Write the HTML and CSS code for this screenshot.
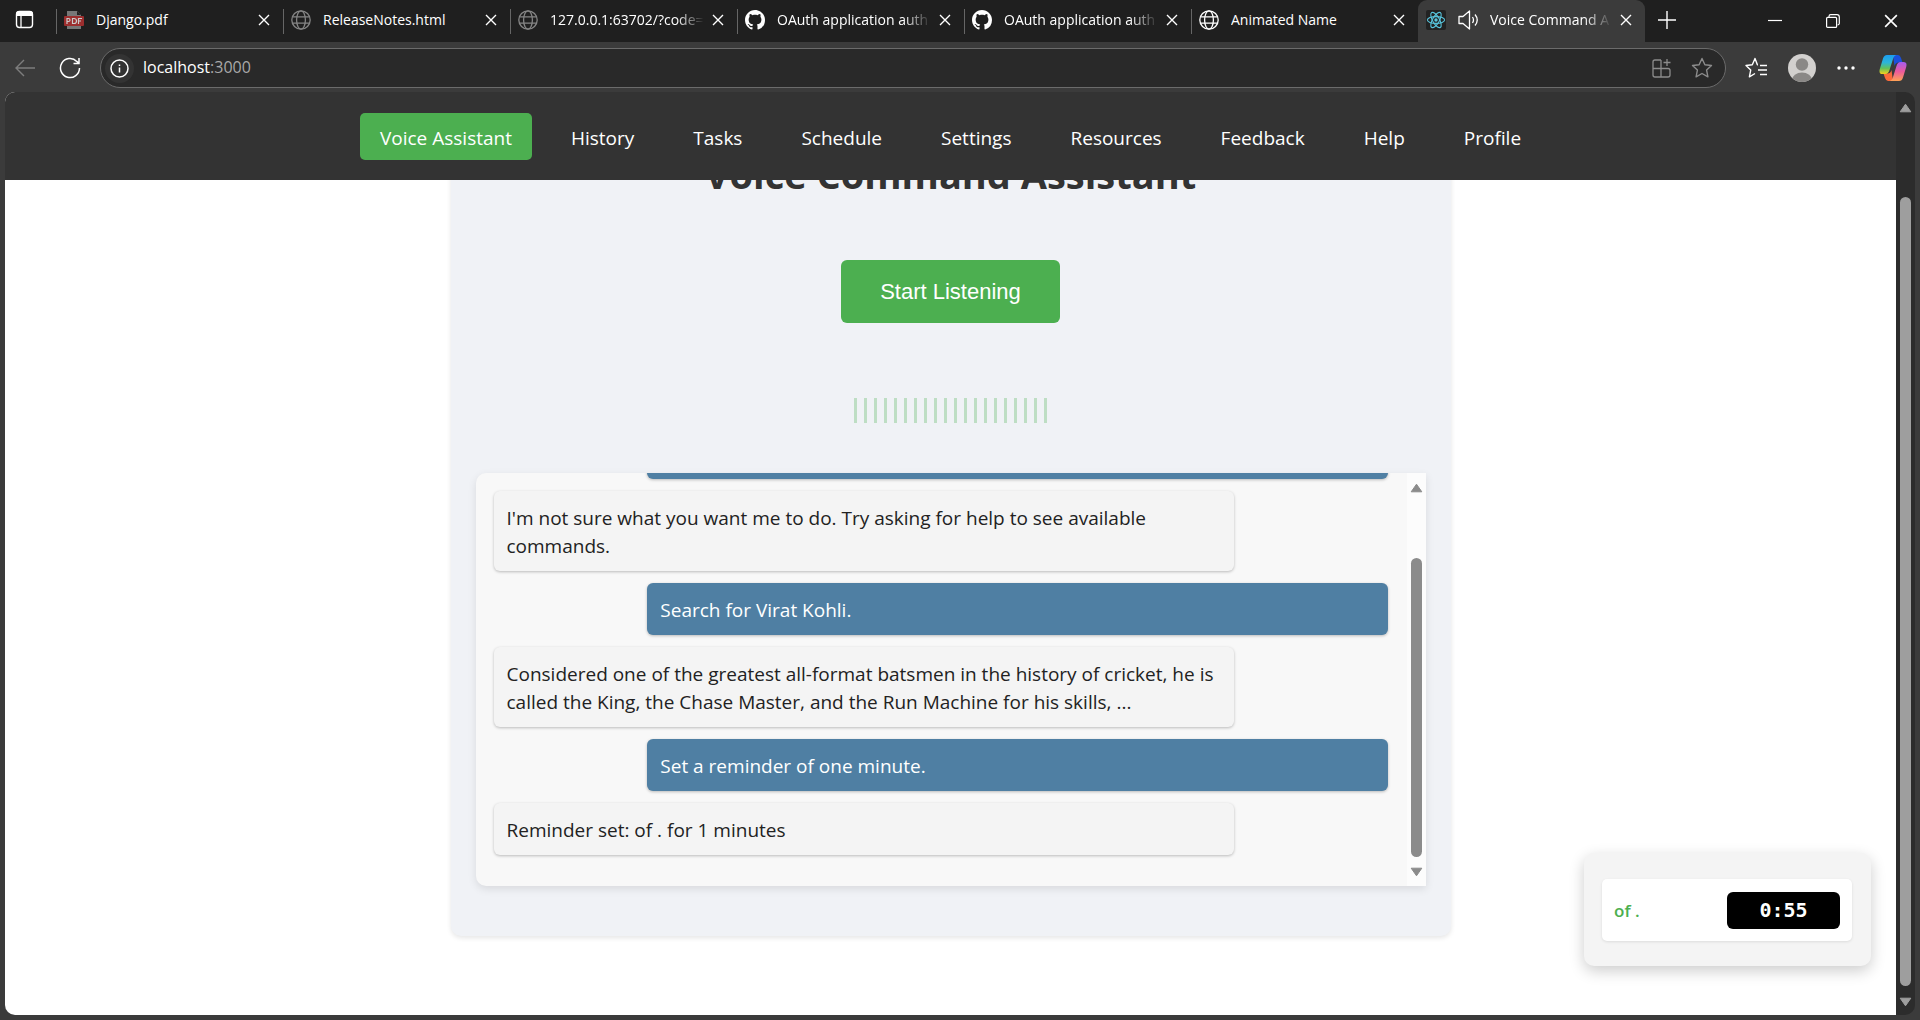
FILE: index.html
```html
<!DOCTYPE html>
<html lang="en">
<head>
<meta charset="utf-8">
<title>Voice Command Assistant</title>
<link rel="stylesheet" href="styles.css">
</head>
<body>
<svg class="defs" aria-hidden="true">
  <symbol id="globe" viewBox="0 0 20 20"><g fill="none" stroke="currentColor" stroke-width="1.3"><circle cx="10" cy="10" r="9.2"/><ellipse cx="10" cy="10" rx="4.4" ry="9.2"/><path d="M1.6 6.8h16.8M1.6 13.2h16.8"/></g></symbol>
  <symbol id="github" viewBox="0 0 16 16"><path fill="currentColor" d="M8 0C3.58 0 0 3.58 0 8c0 3.54 2.29 6.53 5.47 7.59.4.07.55-.17.55-.38 0-.19-.01-.82-.01-1.49-2.01.37-2.53-.49-2.69-.94-.09-.23-.48-.94-.82-1.13-.28-.15-.68-.52-.01-.53.63-.01 1.08.58 1.23.82.72 1.21 1.87.87 2.33.66.07-.52.28-.87.51-1.07-1.78-.2-3.64-.89-3.64-3.95 0-.87.31-1.59.82-2.15-.08-.2-.36-1.02.08-2.12 0 0 .67-.21 2.2.82.64-.18 1.32-.27 2-.27s1.36.09 2 .27c1.53-1.04 2.2-.82 2.2-.82.44 1.1.16 1.92.08 2.12.51.56.82 1.27.82 2.15 0 3.07-1.87 3.75-3.65 3.95.29.25.54.73.54 1.48 0 1.07-.01 1.93-.01 2.2 0 .21.15.46.55.38A8.01 8.01 0 0 0 16 8c0-4.42-3.58-8-8-8z"/></symbol>
  <symbol id="cross" viewBox="0 0 12 12"><path d="M1 1l10 10M11 1L1 11" stroke="currentColor" stroke-width="1.4" fill="none"/></symbol>
  <symbol id="arrow-up" viewBox="0 0 13 10"><path d="M6.5 1.2L11.8 8.8H1.2z" fill="currentColor" stroke="currentColor" stroke-linejoin="round"/></symbol>
  <symbol id="arrow-down" viewBox="0 0 13 10"><path d="M6.5 8.8L11.8 1.2H1.2z" fill="currentColor" stroke="currentColor" stroke-linejoin="round"/></symbol>
</svg>

<div class="browser">
  <div class="tab-strip">
    <button class="tab-actions" aria-label="Tab actions"><svg width="20" height="20" viewBox="0 0 20 20"><rect x="1.5" y="1.5" width="16" height="16" rx="3" fill="none" stroke="#fff" stroke-width="1.4"/><path d="M1 6V4a3 3 0 0 1 3-3h11a3 3 0 0 1 3 3v2z" fill="#fff"/><path d="M6 6v11" stroke="#fff" stroke-width="1.3"/></svg></button>
    <div class="tabs">
      <div class="tab"><svg class="favicon" viewBox="0 0 20 20"><path d="M3 1h10l4 4v14H3z" fill="#777"/><path d="M13 1l4 4h-4z" fill="#222"/><rect x="0" y="6" width="20" height="10" rx="1" fill="#9c2e2e"/><path d="M3 14V8.500h1.500a1.500 1.500 0 0 1 0 3H3M8.500 8.500v5H10a2.500 2.500 0 0 0 0-5zM14.500 14V8.500H18M14.500 11H17" stroke="#ccc" stroke-width="1.200" fill="none"/></svg><span class="tab-title">Django.pdf</span><button class="close" aria-label="Close tab"><svg><use href="#cross"/></svg></button></div>
      <div class="tab"><svg class="favicon dim"><use href="#globe"/></svg><span class="tab-title">ReleaseNotes.html</span><button class="close" aria-label="Close tab"><svg><use href="#cross"/></svg></button></div>
      <div class="tab"><svg class="favicon dim"><use href="#globe"/></svg><span class="tab-title fade">127.0.0.1:63702/?code=</span><button class="close" aria-label="Close tab"><svg><use href="#cross"/></svg></button></div>
      <div class="tab"><svg class="favicon"><use href="#github"/></svg><span class="tab-title fade">OAuth application auth</span><button class="close" aria-label="Close tab"><svg><use href="#cross"/></svg></button></div>
      <div class="tab"><svg class="favicon"><use href="#github"/></svg><span class="tab-title fade">OAuth application auth</span><button class="close" aria-label="Close tab"><svg><use href="#cross"/></svg></button></div>
      <div class="tab"><svg class="favicon"><use href="#globe"/></svg><span class="tab-title">Animated Name</span><button class="close" aria-label="Close tab"><svg><use href="#cross"/></svg></button></div>
      <div class="tab active"><svg class="favicon" viewBox="0 0 20 20"><rect width="20" height="20" rx="2" fill="#222"/><g fill="none" stroke="#58c4dc" stroke-width="1.100"><ellipse cx="10" cy="10" rx="8.600" ry="3.400"/><ellipse cx="10" cy="10" rx="8.600" ry="3.400" transform="rotate(60 10 10)"/><ellipse cx="10" cy="10" rx="8.600" ry="3.400" transform="rotate(120 10 10)"/></g><circle cx="10" cy="10" r="1.700" fill="#58c4dc"/></svg><svg class="speaker" viewBox="0 0 22 20" fill="none" stroke="#fff" stroke-width="1.300"><path d="M1 6.500h4L11.500 1v18L5 13.500H1z" stroke-linejoin="round"/><path d="M14.500 7q2 3 0 6M17 4.500q4.500 5.500 0 11"/></svg><span class="tab-title fade">Voice Command A</span><button class="close" aria-label="Close tab"><svg><use href="#cross"/></svg></button></div>
    </div>
    <button class="new-tab" aria-label="New tab"><svg width="18" height="18" viewBox="0 0 18 18"><path d="M9 0v18M0 9h18" stroke="#fff" stroke-width="1.400"/></svg></button>
    <div class="window-controls">
      <button aria-label="Minimize"><svg width="14" height="14" viewBox="0 0 14 14"><path d="M0 6.500h14" stroke="#fff" stroke-width="1.200"/></svg></button>
      <button aria-label="Restore"><svg width="14" height="14" viewBox="0 0 14 14" fill="none" stroke="#fff" stroke-width="1.200"><rect x=".6" y="3.400" width="10" height="10" rx="1"/><path d="M3 3V2.500A1.800 1.800 0 0 1 4.800.7H11A2.300 2.300 0 0 1 13.300 3v6A1.800 1.800 0 0 1 11.500 11"/></svg></button>
      <button aria-label="Close window"><svg width="14" height="14"><use href="#cross"/></svg></button>
    </div>
  </div>

  <div class="toolbar">
    <button class="tool back" aria-label="Back"><svg width="20" height="18" viewBox="0 0 20 18" fill="none" stroke="#7d7d7d" stroke-width="1.400"><path d="M20 9H1M9 1L1 9l8 8"/></svg></button>
    <button class="tool reload" aria-label="Reload"><svg width="22" height="22" viewBox="0 0 22 22" fill="none" stroke="#fff" stroke-width="1.500"><path d="M20.500 11A9.500 9.500 0 1 1 17.800 4.400L19.500 6M20 1v5.500h-5.500"/></svg></button>
    <div class="address">
      <span class="info"><svg width="19" height="19" viewBox="0 0 19 19" fill="none" stroke="#fff" stroke-width="1.500"><circle cx="9.500" cy="9.500" r="8.500"/><path d="M9.500 8.500V13.500M9.500 5.500V7"/></svg></span>
      <span class="url">localhost<span class="port">:3000</span></span>
      <button class="tool" aria-label="Apps"><svg width="19" height="19" viewBox="0 0 19 19" fill="none" stroke="#8c8c8c" stroke-width="1.300"><path d="M9 1H3a2 2 0 0 0-2 2v13a2 2 0 0 0 2 2h13a2 2 0 0 0 2-2v-4.500a2 2 0 0 0-2-2H1M9 1v17M15 0v7M11.500 3.500h7"/></svg></button>
      <button class="tool" aria-label="Add to favorites"><svg width="22" height="22" viewBox="0 0 22 22" fill="none" stroke="#8c8c8c" stroke-width="1.400" stroke-linejoin="round"><path d="M11 1.500l2.900 6.200 6.600.8-4.900 4.600 1.300 6.700L11 16.500l-5.900 3.300 1.300-6.700L1.500 8.500l6.600-.8z"/></svg></button>
    </div>
    <div class="tools">
      <button class="tool" aria-label="Favorites"><svg width="22" height="22" viewBox="0 0 22 22" fill="none" stroke="#fff" stroke-width="1.400" stroke-linejoin="round"><path d="M13 7.700h-.6L10 1.500 7.300 7.700l-6.300.8 4.700 4.600-1.300 6.700L10 16.500M15 8.500h7M13 13h9M15 17.500h7"/></svg></button>
      <button class="tool" aria-label="Profile"><svg width="28" height="28" viewBox="0 0 28 28"><clipPath id="face"><circle cx="14" cy="14" r="14"/></clipPath><g clip-path="url(#face)"><rect width="28" height="28" fill="#d2d0ce"/><circle cx="14" cy="10.500" r="6.200" fill="#8a8886"/><ellipse cx="14" cy="26" rx="10" ry="7.500" fill="#8a8886"/></g></svg></button>
      <button class="tool" aria-label="Settings and more"><svg width="18" height="4" viewBox="0 0 18 4" fill="#fff"><circle cx="2" cy="2" r="1.700"/><circle cx="9" cy="2" r="1.700"/><circle cx="16" cy="2" r="1.700"/></svg></button>
      <button class="tool copilot" aria-label="Copilot"><svg width="28" height="28" viewBox="0 0 28 28">
        <defs><linearGradient id="cool" x1="0" y1="0" x2="0" y2="1"><stop offset="0" stop-color="#1c9df0"/><stop offset=".4" stop-color="#2cb5d9"/><stop offset=".7" stop-color="#62c15a"/><stop offset="1" stop-color="#f4cf1d"/></linearGradient><linearGradient id="warm" x1="0" y1="0" x2="0" y2="1"><stop offset="0" stop-color="#a35cf0"/><stop offset=".5" stop-color="#ec5a9c"/><stop offset="1" stop-color="#ffa255"/></linearGradient></defs>
        <path d="M14 1h5q2 0 3 3l1.500 4.500h-4q-3 0-4 3.500z" fill="#1a50dc"/><path d="M14 27H9q-2 0-3-3l-1.500-4.500h4q3 0 4-3.500z" fill="#fb6a3a"/>
        <path d="M8 1h9.500q-2.500.5-3.500 4l-3.500 11q-1.200 4-4 4H3.500Q-.5 20 .8 15L4 4.500Q5 1 8 1z" fill="url(#cool)"/><path d="M20 27h-9.500q2.500-.5 3.500-4l3.500-11q1.200-4 4-4h3q4 0 2.700 5L24 23.500Q23 27 20 27z" fill="url(#warm)"/></svg></button>
    </div>
  </div>

  <div class="viewport">
    <div class="page">
      <nav class="nav">
        <a class="current" href="#">Voice Assistant</a>
        <a href="#">History</a>
        <a href="#">Tasks</a>
        <a href="#">Schedule</a>
        <a href="#">Settings</a>
        <a href="#">Resources</a>
        <a href="#">Feedback</a>
        <a href="#">Help</a>
        <a href="#">Profile</a>
      </nav>
      <main class="main">
        <section class="card">
          <h1>Voice Command Assistant</h1>
          <button class="listen">Start Listening</button>
          <div class="wave" aria-hidden="true"><i></i><i></i><i></i><i></i><i></i><i></i><i></i><i></i><i></i><i></i><i></i><i></i><i></i><i></i><i></i><i></i><i></i><i></i><i></i><i></i></div>
          <div class="chat">
            <div class="messages">
              <p class="message user">&nbsp;</p>
              <p class="message">I'm not sure what you want me to do. Try asking for help to see available commands.</p>
              <p class="message user">Search for Virat Kohli.</p>
              <p class="message">Considered one of the greatest all-format batsmen in the history of cricket, he is called the King, the Chase Master, and the Run Machine for his skills, ...</p>
              <p class="message user">Set a reminder of one minute.</p>
              <p class="message">Reminder set: of . for 1 minutes</p>
            </div>
            <div class="scrollbar chat-scroll"><svg><use href="#arrow-up"/></svg><span class="track"><span class="thumb"></span></span><svg><use href="#arrow-down"/></svg></div>
          </div>
        </section>
      </main>
      <aside class="reminders">
        <div class="reminder"><span class="reminder-name">of .</span><time class="countdown">0:55</time></div>
      </aside>
    </div>
    <div class="scrollbar page-scroll"><svg><use href="#arrow-up"/></svg><span class="track"><span class="thumb"></span></span><svg><use href="#arrow-down"/></svg></div>
  </div>
</div>
</body>
</html>
```
FILE: styles.css
```css
* { box-sizing: border-box; }

body {
  margin: 0;
  background: #3b3b3b;
  color: #222;
  font-family: "Open Sans", "Noto Sans", sans-serif;
  font-size: 19px;
}

button {
  margin: 0;
  padding: 0;
  border: 0;
  background: none;
  color: inherit;
  font: inherit;
}

svg { display: block; flex: none; }
.defs { position: absolute; width: 0; height: 0; }

.browser {
  display: flex;
  flex-direction: column;
  height: 100vh;
}

/* Tab strip */
.tab-strip {
  display: flex;
  align-items: stretch;
  height: 42px;
  background: #1f1f1f;
  color: #fff;
  font-size: 14px;
}
.tab-actions { flex: none; width: 56px; padding: 0 0 2px 15px; }
.tabs { display: flex; flex: 0 1 1589px; min-width: 0; }
.tab {
  display: flex;
  align-items: center;
  flex: 1 1 0;
  min-width: 0;
  padding: 0 13px 2px 8px;
  background: linear-gradient(#666, #666) 0 9px / 1px 25px no-repeat;
}
.tab.active { border-radius: 9px 9px 0 0; background: #3b3b3b; }
.favicon { width: 20px; height: 20px; margin-right: 12px; }
.favicon.dim { color: #858585; }
.speaker { width: 22px; height: 24px; margin-right: 10px; }
.tab-title { flex: 1; min-width: 0; padding-bottom: 2px; overflow: hidden; white-space: nowrap; }
.tab-title.fade { -webkit-mask-image: linear-gradient(to left, transparent, #000 28px); mask-image: linear-gradient(to left, transparent, #000 28px); }
.close { display: flex; flex: none; margin-left: 8px; }
.close svg { width: 12px; height: 12px; }
.new-tab { flex: none; width: 44px; padding: 0 0 2px 13px; }
.window-controls { display: flex; margin-left: auto; }
.window-controls button { display: flex; align-items: center; justify-content: center; width: 58px; }

/* Toolbar */
.toolbar {
  display: flex;
  align-items: center;
  height: 50px;
  padding: 2px 13px 0 15px;
  color: #fff;
}
.tool { display: flex; flex: none; }
.reload { margin: 0 19px 0 24px; }
.address {
  display: flex;
  align-items: center;
  flex: 1;
  gap: 20px;
  height: 40px;
  padding: 0 12px 0 4px;
  border: 1px solid #6b6b6b;
  border-radius: 20px;
  background: #292929;
}
.info { display: flex; padding: 5px; border-radius: 50%; background: #333; }
.url { flex: 1; margin-left: -11px; padding-bottom: 2px; font-size: 16px; }
.port { color: #a8a8a8; }
.tools { display: flex; align-items: center; gap: 21px; margin-left: 19px; }
.copilot { margin-left: 3px; }

/* Page area */
.viewport {
  display: flex;
  flex: 1;
  min-height: 0;
  margin: 0 5px 5px;
  overflow: hidden;
  border-radius: 10px;
}
.page {
  position: relative;
  display: flex;
  flex: 1;
  flex-direction: column;
  min-width: 0;
  background: #fff;
}
.nav {
  display: flex;
  align-items: center;
  justify-content: center;
  flex: none;
  gap: 19px;
  height: 88px;
  background: #333;
}
.nav a {
  padding: 12px 20px 8px;
  border-radius: 5px;
  color: #fff;
  line-height: 27px;
  text-decoration: none;
}
.nav .current { background: #4caf50; }

.main {
  display: flex;
  flex: 1;
  flex-direction: column;
  align-items: center;
  justify-content: flex-end;
  min-height: 0;
  padding: 0 20px 79px;
  overflow: hidden;
}
.card {
  display: flex;
  flex-direction: column;
  align-items: center;
  flex: none;
  width: 100%;
  max-width: 1000px;
  padding: 25px 25px 50px;
  border-radius: 10px;
  background: #f0f2f6;
  box-shadow: 0 2px 5px rgba(0, 0, 0, .1);
}
h1 {
  margin: 0 0 60px;
  color: #333;
  font-size: 38px;
  line-height: 52px;
}
.listen {
  height: 63px;
  padding: 0 39px;
  border-radius: 6px;
  background: #4caf50;
  color: #fff;
  font-family: "Liberation Sans", Arial, sans-serif;
  font-size: 22px;
}
.wave { display: flex; gap: 7px; margin: 75px 0 50px; }
.wave i { width: 3px; height: 25px; background: #4caf50; opacity: .3; }

.chat {
  display: flex;
  width: 100%;
  height: 413px;
  overflow: hidden;
  border-radius: 10px 0 0 10px;
  background: #f8f8f8;
  box-shadow: 0 3px 8px rgba(0, 0, 0, .1);
}
.messages {
  display: flex;
  flex: 1;
  flex-direction: column;
  justify-content: flex-end;
  gap: 12px;
  min-width: 0;
  padding: 0 19px 31px 18px;
}
.message {
  flex: none;
  width: calc(80% + 25px);
  margin: 0;
  padding: 13px 13px 11px;
  border-radius: 6px;
  background: #f4f4f4;
  box-shadow: 0 1px 3px rgba(0, 0, 0, .25);
  line-height: 28px;
}
.message.user { align-self: flex-end; background: #4f7fa3; color: #fff; }

/* Scrollbars */
.scrollbar {
  display: flex;
  flex: none;
  flex-direction: column;
  align-items: center;
  justify-content: space-between;
  width: 19px;
  padding: 10px 0 9px;
}
.scrollbar svg { width: 13px; height: 10px; }
.track { display: flex; flex: 1; width: 11px; }
.thumb { flex: 1; border-radius: 6px; background: currentColor; }
.chat-scroll { background: #fcfcfc; color: #8b8b8b; }
.chat-scroll .track { padding: 65px 0 10px; }
.page-scroll { padding: 11px 0 8px; background: #2c2c2c; color: #9e9e9e; }
.page-scroll .track { padding: 84px 0 11px; }

/* Floating reminder list */
.reminders {
  position: absolute;
  right: 25px;
  bottom: 49px;
  width: 287px;
  padding: 26px 19px 25px 18px;
  border-radius: 10px;
  background: #f4f4f4;
  box-shadow: 0 5px 15px rgba(0, 0, 0, .2);
}
.reminder {
  display: flex;
  align-items: center;
  justify-content: space-between;
  height: 62px;
  padding: 0 12px;
  border-radius: 5px;
  background: #fff;
  box-shadow: 0 1px 3px rgba(0, 0, 0, .1);
}
.reminder-name { color: #4caf50; font-size: 17px; font-weight: 600; }
.countdown {
  width: 113px;
  border-radius: 6px;
  background: #000;
  color: #fff;
  font: bold 20px/37px "DejaVu Sans Mono", monospace;
  text-align: center;
}
```
